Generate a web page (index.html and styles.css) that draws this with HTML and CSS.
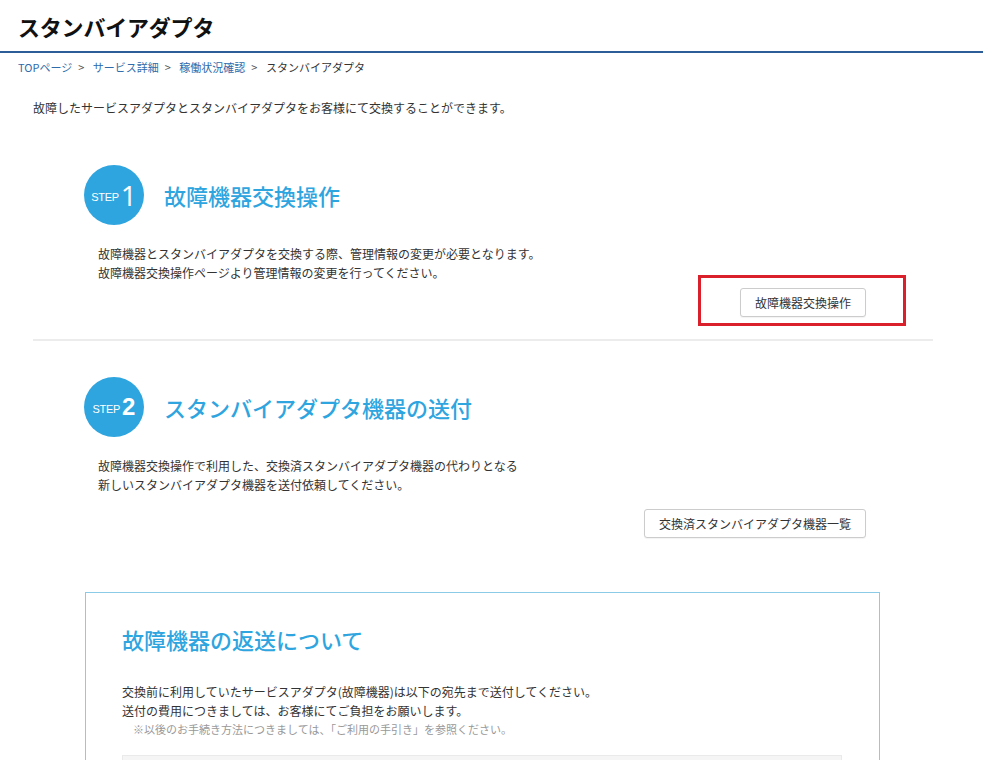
FILE: index.html
```html
<!DOCTYPE html>
<html lang="ja">
<head>
  <meta charset="UTF-8">
  <meta name="viewport" content="width=device-width, initial-scale=1.0">
  <title>スタンバイアダプタ</title>
  <link rel="stylesheet" href="styles.css">
</head>
<body>

  <header class="page-header">
    <h1>スタンバイアダプタ</h1>
  </header>

  <nav class="breadcrumb">
    <a href="#">TOPページ</a><span class="sep">&gt;</span>
    <a href="#">サービス詳細</a><span class="sep">&gt;</span>
    <a href="#">稼働状況確認</a><span class="sep">&gt;</span>
    <span>スタンバイアダプタ</span>
  </nav>

  <main class="content">
    <p class="intro">故障したサービスアダプタとスタンバイアダプタをお客様にて交換することができます。</p>

    <section class="step">
      <div class="step-head">
        <div class="step-badge"><span class="step-label">STEP</span><span class="step-num">1</span></div>
        <h2>故障機器交換操作</h2>
      </div>
      <p class="step-text">故障機器とスタンバイアダプタを交換する際、管理情報の変更が必要となります。<br>故障機器交換操作ページより管理情報の変更を行ってください。</p>
      <div class="step-actions">
        <div class="btn-wrap">
          <button class="btn">故障機器交換操作</button>
          <span class="highlight"></span>
        </div>
      </div>
    </section>

    <hr class="divider">

    <section class="step step-second">
      <div class="step-head">
        <div class="step-badge"><span class="step-label">STEP</span><span class="step-num num-bold">2</span></div>
        <h2>スタンバイアダプタ機器の送付</h2>
      </div>
      <p class="step-text">故障機器交換操作で利用した、交換済スタンバイアダプタ機器の代わりとなる<br>新しいスタンバイアダプタ機器を送付依頼してください。</p>
      <div class="step-actions">
        <button class="btn">交換済スタンバイアダプタ機器一覧</button>
      </div>
    </section>

    <section class="return-box">
      <h2>故障機器の返送について</h2>
      <p class="box-text">交換前に利用していたサービスアダプタ(故障機器)は以下の宛先まで送付してください。<br>送付の費用につきましては、お客様にてご負担をお願いします。</p>
      <p class="note">※以後のお手続き方法につきましては、「ご利用の手引き」を参照ください。</p>
      <div class="address"></div>
    </section>
  </main>

</body>
</html>
```

FILE: styles.css
```css
body {
  margin: 0;
  font-family: "Noto Sans CJK JP", "Noto Sans", sans-serif;
  font-size: 12px;
  color: #333;
  background-color: #fff;
}

.page-header {
  height: 51px;
  border-bottom: 2px solid #2c5d98;
  padding: 0 18px;
  display: flex;
  align-items: center;
}

.page-header h1 {
  margin: 0;
  font-size: 22px;
  font-weight: 700;
  color: #111;
  letter-spacing: -0.2px;
}

.breadcrumb {
  margin-top: 6px;
  padding: 0 18px;
  line-height: 16px;
  font-size: 11px;
  color: #333;
}

.breadcrumb a {
  color: #2f6bab;
  text-decoration: none;
}

.breadcrumb .sep {
  margin: 0 6px;
  color: #555;
}

.content {
  width: 900px;
  margin-left: 33px;
}

.intro {
  margin: 24px 0 0;
  line-height: 18px;
}

.step {
  margin-top: 48px;
}

.step-second {
  margin-top: 36px;
}

.step-head {
  display: flex;
  align-items: center;
  gap: 20px;
  padding-left: 51px;
}

.step-badge {
  width: 60px;
  height: 60px;
  border-radius: 50%;
  background-color: #2fa5df;
  color: #fff;
  display: flex;
  align-items: center;
  justify-content: center;
  gap: 2px;
}

.step-label {
  font-family: "Liberation Sans", sans-serif;
  font-size: 11px;
  margin-top: 3px;
  letter-spacing: -0.3px;
}

.step-num {
  font-family: "Open Sans", sans-serif;
  font-size: 28px;
  font-weight: 400;
  line-height: 1;
}

.num-bold {
  font-family: "Liberation Sans", sans-serif;
  font-weight: 700;
  font-size: 24px;
}

.step-head h2 {
  margin: 0;
  font-size: 22px;
  font-weight: 500;
  color: #2fa5df;
}

.step-text {
  margin: 19px 0 0 65px;
  line-height: 19px;
}

.step-actions {
  display: flex;
  justify-content: flex-end;
  padding-right: 67px;
  margin-top: 6px;
}

.step-second .step-actions {
  margin-top: 15px;
}

.btn-wrap {
  position: relative;
}

.btn {
  font-family: inherit;
  font-size: 12px;
  color: #333;
  background-color: #fff;
  border: 1px solid #ccc;
  border-radius: 3px;
  height: 29px;
  padding: 0 14px;
  box-shadow: 0 1px 1px rgba(0,0,0,0.05);
  cursor: pointer;
}

.highlight {
  position: absolute;
  top: -13px;
  bottom: -9px;
  left: -42px;
  right: -40px;
  border: 3px solid #d9202b;
  pointer-events: none;
}

.divider {
  margin: 22px 0 0;
  border: none;
  height: 2px;
  background-color: #ececec;
}

.return-box {
  margin: 54px 53px 0 52px;
  border: 1px solid #8ccbe8;
  padding: 30px 37px 20px 36px;
}

.return-box h2 {
  margin: 0;
  font-size: 22px;
  font-weight: 500;
  color: #2fa5df;
  line-height: 32px;
}

.box-text {
  margin: 27px 0 0;
  line-height: 19px;
}

.note {
  margin: 0 0 0 11px;
  line-height: 19px;
  font-size: 11px;
  color: #999;
}

.address {
  margin-top: 16px;
  height: 80px;
  background-color: #f5f5f5;
  border: 1px solid #eaeaea;
}
```
